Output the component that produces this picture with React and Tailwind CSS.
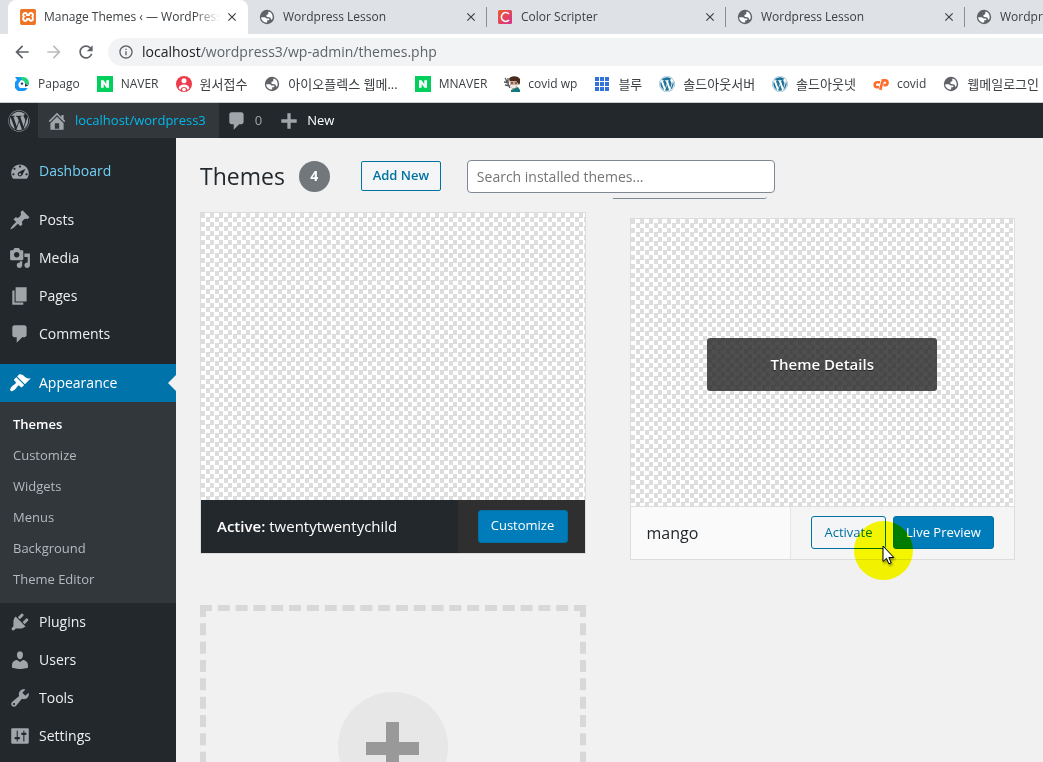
import { MdClose, MdArrowBack, MdArrowForward, MdRefresh, MdInfoOutline } from "react-icons/md";
import { FaWordpress } from "react-icons/fa";
import { SiXampp } from "react-icons/si";

const ICONS = {
  dashboard:
    "M3.76 17h12.48C17.34 15.63 18 13.89 18 12c0-4.41-3.58-8-8-8s-8 3.59-8 8c0 1.89.66 3.63 1.76 5zM9 6c0-.55.45-1 1-1s1 .45 1 1-.45 1-1 1-1-.45-1-1zM4 8c0-.55.45-1 1-1s1 .45 1 1-.45 1-1 1-1-.45-1-1zm4.52 3.4c.84-.83 6.51-3.5 6.51-3.5s-2.66 5.68-3.49 6.51c-.84.84-2.18.84-3.02 0-.83-.83-.83-2.18 0-3.01zM3 13c0-.55.45-1 1-1s1 .45 1 1-.45 1-1 1-1-.45-1-1zm6 0c0 .55.45 1 1 1s1-.45 1-1-.45-1-1-1-1 .45-1 1zm6 0c0-.55.45-1 1-1s1 .45 1 1-.45 1-1 1-1-.45-1-1z",
  posts:
    "M10.44 3.02l1.82-1.82 6.36 6.35-1.83 1.82c-1.05-.68-2.48-.57-3.41.36l-.75.75c-.92.93-1.04 2.35-.35 3.41l-1.83 1.82-2.41-2.41-2.8 2.79c-.42.42-3.38 2.71-3.8 2.29s1.86-3.39 2.28-3.81l2.79-2.79L4.1 9.36l1.83-1.82c1.05.69 2.48.57 3.4-.36l.75-.75c.93-.92 1.05-2.35.36-3.41z",
  media:
    "M13 11V4c0-.55-.45-1-1-1h-1.67L9 1H5L3.67 3H2c-.55 0-1 .45-1 1v7c0 .55.45 1 1 1h10c.55 0 1-.45 1-1zM7 4.5c1.38 0 2.5 1.12 2.5 2.5S8.38 9.5 7 9.5 4.5 8.38 4.5 7 5.62 4.5 7 4.5zM14 6h5v10.5c0 1.38-1.12 2.5-2.5 2.5S14 17.88 14 16.5s1.12-2.5 2.5-2.5c.17 0 .34.02.5.05V9h-3V6zm-4 8.05V13h2v3.5c0 1.38-1.12 2.5-2.5 2.5S7 17.88 7 16.5 8.12 14 9.5 14c.17 0 .34.02.5.05z",
  pages: "M6 15V2h10v13H6zm-1 1h8v2H3V5h2v11z",
  comments: "M5 2h9c1.1 0 2 .9 2 2v7c0 1.1-.9 2-2 2h-2l-5 5v-5H5c-1.1 0-2-.9-2-2V4c0-1.1.9-2 2-2z",
  appearance:
    "M14.48 11.06L7.41 3.99l1.5-1.5c.5-.56 2.3-.47 3.51.32 1.21.8 1.43 1.28 2.91 2.1 1.18.64 2.45 1.26 4.45.85zm-.71.71L6.7 4.7 4.93 6.47c-.39.39-.39 1.02 0 1.41l1.06 1.06c.39.39.39 1.03 0 1.42-.6.6-1.43 1.11-2.21 1.69-.35.26-.7.53-1.01.84C1.43 14.23.4 16.08 1.4 17.07c.99 1 2.84-.03 4.18-1.36.31-.31.58-.66.85-1.02.57-.78 1.08-1.61 1.69-2.21.39-.39 1.02-.39 1.41 0l1.06 1.06c.39.39 1.02.39 1.41 0z",
  plugins:
    "M13.11 4.36L9.87 7.6 8 5.73l3.24-3.24c.35-.34 1.05-.2 1.56.32.52.51.66 1.21.31 1.55zm-8 1.77l.91-1.12 9.01 9.01-1.19.84c-.71.71-2.63 1.16-3.82 1.16H6.14L4.9 17.26c-.59.59-1.54.59-2.12 0-.59-.58-.59-1.53 0-2.12l1.24-1.24v-3.88c0-1.13.4-3.19 1.09-3.89zm7.26 3.97l3.24-3.24c.34-.35 1.04-.21 1.55.31.52.51.66 1.21.31 1.55l-3.24 3.25z",
  users:
    "M10 9.25c-2.27 0-2.73-3.44-2.73-3.44C7 4.02 7.82 2 9.97 2c2.16 0 2.98 2.02 2.71 3.81 0 0-.41 3.44-2.68 3.44zm0 2.57L12.72 10c2.39 0 4.52 2.33 4.52 4.53v2.49s-3.65 1.13-7.24 1.13c-3.65 0-7.24-1.13-7.24-1.13v-2.49c0-2.25 1.94-4.48 4.47-4.48z",
  tools:
    "M16.68 9.77c-1.34 1.34-3.3 1.67-4.95.99l-5.41 6.52c-.99.99-2.59.99-3.58 0s-.99-2.59 0-3.57l6.52-5.42c-.68-1.65-.35-3.61.99-4.95 1.28-1.28 3.12-1.62 4.72-1.06l-2.89 2.89 2.82 2.82 2.86-2.87c.53 1.58.18 3.39-1.08 4.65zM3.81 16.21c.4.39 1.04.39 1.43 0 .4-.4.4-1.04 0-1.43-.39-.4-1.03-.4-1.43 0-.39.39-.39 1.03 0 1.43z",
  settings:
    "M18 16V4c0-.55-.45-1-1-1H3c-.55 0-1 .45-1 1v12c0 .55.45 1 1 1h14c.55 0 1-.45 1-1zM8 11h1c.55 0 1 .45 1 1s-.45 1-1 1H8v1.5c0 .28-.22.5-.5.5s-.5-.22-.5-.5V13H6c-.55 0-1-.45-1-1s.45-1 1-1h1V5.5c0-.28.22-.5.5-.5s.5.22.5.5V11zm5-2h-1c-.55 0-1-.45-1-1s.45-1 1-1h1V5.5c0-.28.22-.5.5-.5s.5.22.5.5V7h1c.55 0 1 .45 1 1s-.45 1-1 1h-1v5.5c0 .28-.22.5-.5.5s-.5-.22-.5-.5V9z",
  home:
    "M16 8.5l1.53 1.53-1.06 1.06L10 4.6l-6.47 6.49-1.06-1.06L10 2.5l4 4v-2h2v4zm-6-2.46l6 5.99V18H4v-5.97zM12 17v-5H8v5h4z",
  plus: "M17 8.5v3h-5.500v5.500h-3v-5.500H3v-3h5.500V3h3v5.500z",
};

function Dashicon({ name, className = "" }) {
  return (
    <svg viewBox="0 0 20 20" fill="currentColor" fillRule="evenodd" aria-hidden="true" className={`size-[22px] shrink-0 ${className}`}>
      <path d={ICONS[name]} />
    </svg>
  );
}

const Globe = () => (
  <svg viewBox="0 0 16 16" className="size-4 shrink-0">
    <circle cx="8" cy="8" r="7.200" fill="#5f6368" />
    <path d="M2.200 8.200h3.400c1.300 0 1.400 1.300 2.600 1.400h1.500c1 0 1 1.500 0 1.700H8.200v2.200c-3 .2-6-2-6-5.300z" fill="#fff" />
    <path d="M13.700 8.100c0 1-.3 1.800-.8 2.700-1.200-.3-.8-1.800-1.800-2.300-1.400-.5-3.200 0-3.700-1.300-.4-1.300.8-1.900 1.900-2 .2-.9-.4-1.600.4-2.700 2.400.6 4 2.800 4 5.600z" fill="#fff" />
  </svg>
);
const WpBlue = () => <FaWordpress className="size-4 shrink-0 text-[#21759b]" />;

const Xampp = () => <SiXampp className="size-4 shrink-0 text-[#ee7424]" />;

const ColorC = () => (
  <svg viewBox="0 0 14 14" className="mr-px size-[14px] shrink-0">
    <defs>
      <linearGradient id="cs" x1="0" y1="0" x2="1" y2="1">
        <stop offset="0" stopColor="#f0592a" />
        <stop offset="1" stopColor="#d6338f" />
      </linearGradient>
    </defs>
    <rect width="14" height="14" rx="1.500" fill="url(#cs)" />
    <path d="M11 4A4.400 4.400 0 1 0 11 10" fill="none" stroke="#fff" strokeWidth="1.500" />
  </svg>
);

const Papago = () => (
  <svg viewBox="0 0 16 16" className="size-4 shrink-0">
    <path d="M1 1h7l2 2-4 9 5 1.500C10 14.500 9 15 7 15H4l-3-3V6l2-2z" fill="#1496fb" />
    <path d="M6 1h3a6 6 0 0 1 6 6.500V9L9.500 7z" fill="#1fd37a" />
    <path d="M4.500 7.500L7 4l3 1 1.500 3.500-.5 3.500H7a3 3 0 0 1-2.500-2z" fill="#fff" />
    <path d="M7 12h6.500a5 5 0 0 1-4.500 3H6z" fill="#1496fb" />
    <circle cx="8" cy="7.600" r="1.200" fill="#1b3a57" />
    <path d="M11 7.500l3.500 2-3.500 1.200z" fill="#1b3a57" />
  </svg>
);

const Naver = () => (
  <svg viewBox="0 0 16 16" className="size-4 shrink-0">
    <rect width="16" height="16" fill="#03cf5d" />
    <path d="M4 4.300h2.600l2.700 3.900V4.300H12v7.400H9.400L6.700 7.800v3.900H4z" fill="#fff" />
  </svg>
);

const RedPerson = () => (
  <svg viewBox="0 0 16 16" className="size-4 shrink-0">
    <circle cx="8" cy="8" r="8" fill="#ee3a4a" />
    <circle cx="8" cy="4.800" r="2.500" fill="#fff" />
    <path d="M2.600 12.200C3 9.700 5 8.500 8 8.500s5 1.200 5.400 3.700l-2 1.900C11 12 10 11 8 11s-3 1-3.400 3.100z" fill="#fff" />
    <circle cx="8" cy="13.600" r="1.800" fill="#fff" />
  </svg>
);

const Avatar = () => (
  <svg viewBox="0 0 16 16" className="size-4 shrink-0">
    <path d="M5 3c1-3 8-4 11 0 .6 2 0 5-1 6l-3-4-6 1z" fill="#4b2a1c" />
    <path d="M6 5h6l2 3-2 5H8L6 9z" fill="#c9a592" />
    <path d="M6 9l7 0-2 3H8z" fill="#eee9e6" />
    <path d="M7 14l7-3 2 3v2H7z" fill="#13787c" />
    <path d="M1 2l2 3M0 6l5 1M4 2v6M1 9l5 1M2 4l4 8" stroke="#54565b" strokeWidth="1.300" fill="none" />
    <path d="M7 7h2M11 7h2" stroke="#222" strokeWidth="1.200" />
  </svg>
);

const AppsGrid = () => (
  <svg viewBox="0 0 16 16" fill="#3272d9" className="size-4 shrink-0">
    {[1, 6, 11].map((y) => [1, 6, 11].map((x) => <rect key={`${x}-${y}`} x={x} y={y} width="4" height="4" />))}
  </svg>
);

const Cpanel = () => (
  <svg viewBox="0 0 16 16" fill="none" stroke="#ff6c2c" strokeWidth="2.600" className="size-4 shrink-0">
    <path d="M7 6.200H4.200a2.500 2.500 0 0 0 0 5H6" />
    <path d="M7.200 13.800L9.800 4.400h2.400a2.300 2.300 0 0 1 0 4.700H10.500" />
  </svg>
);

const TABS = [
  { title: "Wordpress Lesson", Icon: Globe },
  { title: "Color Scripter", Icon: ColorC },
  { title: "Wordpress Lesson", Icon: Globe },
  { title: "Wordpress Lesson", Icon: Globe },
];

const BOOKMARKS = [
  { label: "Papago", Icon: Papago },
  { label: "NAVER", Icon: Naver },
  { label: "원서접수", Icon: RedPerson, ko: true },
  { label: "아이오플렉스 웹메...", Icon: Globe, ko: true },
  { label: "MNAVER", Icon: Naver },
  { label: "covid wp", Icon: Avatar },
  { label: "블루", Icon: AppsGrid, ko: true },
  { label: "솔드아웃서버", Icon: WpBlue, ko: true },
  { label: "솔드아웃넷", Icon: WpBlue, ko: true },
  { label: "covid", Icon: Cpanel },
  { label: "웹메일로그인", Icon: Globe, ko: true },
];

function Browser() {
  return (
    <header className="shrink-0 border-b border-[#c9cbce] bg-white text-xs text-[#3c4043]">
      <div className="flex h-[34px] overflow-hidden bg-[#dee1e6] pl-2">
        <div className="flex w-60 shrink-0 items-center rounded-t-lg bg-white pr-2 pl-3">
          <Xampp />
          <span className="ml-2 flex-1 overflow-hidden whitespace-nowrap [mask-image:linear-gradient(to_right,black_85%,transparent)]">
            Manage Themes ‹ — WordPress
          </span>
          <button aria-label="Close tab" className="ml-1 p-px">
            <MdClose className="size-[14px]" />
          </button>
        </div>
        {TABS.map(({ title, Icon }, i) => (
          <div key={i} className="flex w-[239px] shrink-0 items-center">
            <div className="flex h-5 flex-1 items-center border-r border-[#8a8d91] pr-[7px] pl-[11px]">
              <Icon />
              <span className="ml-2 flex-1 whitespace-nowrap">{title}</span>
              <button aria-label="Close tab" className="p-px">
                <MdClose className="size-[14px]" />
              </button>
            </div>
          </div>
        ))}
      </div>
      <div className="flex h-9 items-center pl-3 text-[#5f6368]">
        <button aria-label="Back"><MdArrowBack className="size-5" /></button>
        <button aria-label="Forward" className="ml-3 text-[#babcbe]"><MdArrowForward className="size-5" /></button>
        <button aria-label="Reload" className="ml-3"><MdRefresh className="size-5" /></button>
        <div className="ml-3 flex h-7 flex-1 items-center rounded-l-full bg-[#f1f3f4] pl-[10px]">
          <MdInfoOutline className="size-4" />
          <span className="ml-2 text-sm">
            <span className="text-[#202124]">localhost</span>/wordpress3/wp-admin/themes.php
          </span>
        </div>
      </div>
      <nav className="flex h-8 items-center gap-[17px] overflow-hidden pb-1 pl-[14px]">
        {BOOKMARKS.map(({ label, Icon, ko }) => (
          <a key={label} href="#" className="flex shrink-0 items-center gap-2">
            <Icon />
            <span className={ko ? "text-[13px] leading-4 whitespace-nowrap" : "text-xs whitespace-nowrap"}>{label}</span>
          </a>
        ))}
      </nav>
    </header>
  );
}

function AdminBar() {
  return (
    <div className="flex h-[35px] shrink-0 items-center bg-[#23282d] text-[13px] text-[#eee]">
      <a href="#" aria-label="About WordPress" className="flex h-full w-[38px] items-center justify-center text-[#a0a5aa]">
        <FaWordpress className="size-[22px]" />
      </a>
      <a href="#" className="flex h-full items-center gap-[7px] bg-[#32373c] pr-[13px] pl-2 text-[#00b9eb]">
        <Dashicon name="home" className="text-[#a0a5aa]" />
        localhost/wordpress3
      </a>
      <a href="#" className="ml-[7px] flex items-center gap-[7px] text-[#a0a5aa]">
        <Dashicon name="comments" />0
      </a>
      <a href="#" className="ml-4 flex items-center gap-[7px] text-white">
        <Dashicon name="plus" className="text-[#a0a5aa]" />New
      </a>
    </div>
  );
}

function MenuItem({ icon, label, className = "text-[#eee]", iconClass = "text-[#a0a5aa]" }) {
  return (
    <a href="#" className={`flex h-[38px] items-center gap-2 pl-[9px] text-sm ${className}`}>
      <Dashicon name={icon} className={iconClass} />
      {label}
    </a>
  );
}

function Sidebar() {
  return (
    <nav className="w-44 shrink-0 bg-[#23282d] pt-[14px]">
      <MenuItem icon="dashboard" label="Dashboard" className="mb-[11px] text-[#72d0f3]" />
      <MenuItem icon="posts" label="Posts" />
      <MenuItem icon="media" label="Media" />
      <MenuItem icon="pages" label="Pages" />
      <MenuItem icon="comments" label="Comments" />
      <div className="relative mt-[11px]">
        <MenuItem icon="appearance" label="Appearance" className="bg-[#0073aa] text-white" iconClass="text-white" />
        <span className="absolute top-1/2 right-0 -translate-y-1/2 border-y-8 border-r-8 border-y-transparent border-r-[#f1f1f1]" />
      </div>
      <div className="flex flex-col bg-[#32373c] pt-[7px] pb-2 text-[13px] text-[#b4b9be]">
        {["Themes", "Customize", "Widgets", "Menus", "Background", "Theme Editor"].map((t, i) => (
          <a key={t} href="#" className={`pl-[13px] leading-[31px] ${i === 0 ? "font-semibold text-white" : ""}`}>
            {t}
          </a>
        ))}
      </div>
      <MenuItem icon="plugins" label="Plugins" />
      <MenuItem icon="users" label="Users" />
      <MenuItem icon="tools" label="Tools" />
      <MenuItem icon="settings" label="Settings" />
    </nav>
  );
}

function Checker({ children }) {
  return (
    <div className="flex aspect-[384/287] items-center justify-center bg-white bg-[conic-gradient(#fff_25%,#ddd_0_50%,#fff_0_75%,#ddd_0)] bg-[length:9px_9px]">
      {children}
    </div>
  );
}

const primary = "h-[33px] rounded-[3px] border border-[#0071a1] bg-[#007cba] text-[13px] text-white";

function Themes() {
  return (
    <main className="min-w-0 flex-1 pt-[22px] pr-7 pl-6">
      <div className="flex h-8 items-center">
        <h1 className="text-[23px] text-[#23282d]">Themes</h1>
        <span className="ml-[14px] flex size-[31px] items-center justify-center rounded-full bg-[#72777c] text-sm font-bold text-white">4</span>
        <button className="ml-[31px] h-[30px] w-20 rounded-xs border border-[#0071a1] bg-[#f3f5f6] text-[13px] font-semibold text-[#0071a1]">
          Add New
        </button>
        <div className="relative ml-[26px] w-[308px]">
          <input
            type="search"
            aria-label="Search installed themes"
            placeholder="Search installed themes..."
            className="block h-[33px] w-full rounded border border-[#7e8993] bg-white px-[9px] text-sm placeholder:text-[#757575]"
          />
          <span className="absolute top-9 right-2 h-[3px] w-[154px] rounded-br-sm border-b border-[#7e8993]" />
        </div>
      </div>
      <div className="mt-5 grid grid-cols-2 gap-x-11 gap-y-[45px]">
        <article className="self-start border border-[#ddd]">
          <Checker />
          <div className="flex h-[53px] items-stretch bg-[#23282d]">
            <h2 className="flex flex-1 items-center gap-1 pl-4 text-[15px] text-white">
              <strong className="font-semibold">Active:</strong> twentytwentychild
            </h2>
            <div className="flex items-center bg-[#2f2f2f] pr-[17px] pl-5">
              <button className={`${primary} w-[90px]`}>Customize</button>
            </div>
          </div>
        </article>
        <article className="mt-[6px] border border-[#ddd]">
          <Checker>
            <button className="mt-1 h-[53px] w-3/5 rounded-[3px] bg-[#232323]/80 text-[15px] font-semibold text-white [text-shadow:0_1px_0_rgba(0,0,0,0.6)]">
              Theme Details
            </button>
          </Checker>
          <div className="flex h-[53px] items-stretch border-t border-[#ddd] bg-[#fafafa]">
            <h2 className="flex flex-1 items-center pl-4 text-base font-medium text-[#23282d]">mango</h2>
            <div className="relative flex items-center gap-[7px] border-l border-[#e5e5e5] bg-[#f5f5f5] px-5">
              <button className="h-[33px] w-[75px] rounded-[3px] border border-[#0071a1] bg-[#f3f5f6] text-[13px] text-[#0071a1]">Activate</button>
              <button className={`${primary} w-[101px]`}>Live Preview</button>
              <span className="pointer-events-none absolute top-[14px] left-[63px] size-[59px] rounded-full bg-[#ffff00] mix-blend-multiply" />
              <svg viewBox="0 0 13 20" className="pointer-events-none absolute top-[38px] left-[91px] h-5 w-[13px] drop-shadow-[1px_2px_1px_rgba(0,0,0,0.4)]">
                <path d="M1 1v15.500l3.500-3.200 2.300 5.500 2.400-1-2.300-5.300h4.900z" fill="#fff" stroke="#000" />
              </svg>
            </div>
          </div>
        </article>
        <a href="#" aria-label="Add New Theme" className="flex aspect-[385/342] justify-center border-6 border-dashed border-[#d8d8d8] pt-[81px]">
          <span className="flex size-[110px] items-center justify-center rounded-full bg-[#e7e7e7] pt-1">
            <svg viewBox="0 0 53 53" fill="#999" className="size-[53px]">
              <path d="M20 0h13v20h20v13H33v20H20V33H0V20h20z" />
            </svg>
          </span>
        </a>
      </div>
    </main>
  );
}

export default function App() {
  return (
    <div className="flex h-screen flex-col overflow-hidden bg-[#f1f1f1] font-['Open_Sans','Noto_Sans_CJK_KR',sans-serif]">
      <Browser />
      <AdminBar />
      <div className="flex min-h-0 flex-1 overflow-hidden">
        <Sidebar />
        <Themes />
      </div>
    </div>
  );
}
